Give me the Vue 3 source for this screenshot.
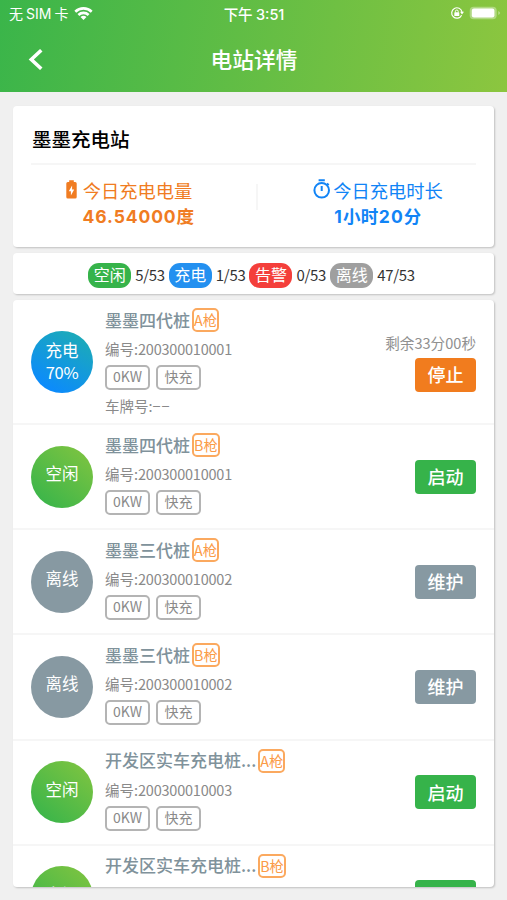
<template>
  <div class="page">
    <header class="header">
      <div class="status-bar">
        <div class="carrier">
          <span>无<span class="latin sim">SIM</span>卡</span>
          <svg class="wifi" viewBox="0 0 19 14">
            <path d="M.4 4.8a13 13 0 0 1 18.2 0L16.8 6.7a10.4 10.4 0 0 0-14.6 0z" />
            <path d="M3.5 8a8.6 8.6 0 0 1 12 0l-1.8 1.9a6 6 0 0 0-8.4 0z" />
            <path d="M6.5 11.1a4.3 4.3 0 0 1 6 0L9.5 14z" />
          </svg>
        </div>
        <div class="time">下午 <span class="latin">3:51</span></div>
        <div class="indicators">
          <svg class="lock" viewBox="0 0 14 14">
            <path d="M12 6A5.2 5.2 0 1 0 11.6 9.2" fill="none" stroke="currentColor" stroke-width="1.2" />
            <path d="M10 5.7h4L12 8.4z" />
            <rect x="4.3" y="6.3" width="5" height="3.8" rx=".6" />
            <path d="M5.4 6.5V5.4a1.4 1.4 0 0 1 2.8 0v1.1" fill="none" stroke="currentColor" />
          </svg>
          <svg class="battery" viewBox="0 0 32 14">
            <rect x=".7" y=".7" width="27" height="12.6" rx="4" class="battery-shell" />
            <rect x="2.8" y="2.6" width="22.6" height="8.8" rx="2.2" />
            <path d="M29.2 5v4q2-.8 2-2t-2-2z" class="battery-tip" />
          </svg>
        </div>
      </div>
      <div class="nav-bar">
        <svg class="back" viewBox="0 0 14 20">
          <path d="M12.500 1.200 3 10l9.500 8.800" />
        </svg>
        <h1>电站详情</h1>
      </div>
    </header>

    <main class="content">
      <section class="card summary">
        <h2>墨墨充电站</h2>
        <div class="stats">
          <div class="stat energy">
            <div class="stat-label">
              <svg class="energy-icon" viewBox="0 0 11 19">
                <path fill-rule="evenodd" d="M3.2.3h4.6v1.8h1.4q1.5 0 1.5 1.5v13.5q0 1.5-1.5 1.5H1.8Q.3 18.600.3 17.100V3.600Q.3 2.100 1.800 2.100h1.400zM6.100 5.500 2.800 11.200h2.100v4.300l3.300-5.900H6.100z" />
              </svg>
              <span>今日充电电量</span>
            </div>
            <div class="stat-value"><span class="latin">46.54000</span>度</div>
          </div>
          <div class="stat duration">
            <div class="stat-label">
              <svg class="timer-icon" viewBox="0 0 18 20">
                <circle cx="8.700" cy="11.300" r="7.300" />
                <path d="M5.600 1.200h6.200M8.700 7v5M14 4.400l1.700 1.700" />
              </svg>
              <span>今日充电时长</span>
            </div>
            <div class="stat-value"><span class="latin">1</span>小时<span class="latin">20</span>分</div>
          </div>
        </div>
      </section>

      <section class="card counts">
        <div v-for="count in counts" :key="count.label" class="count">
          <span class="pill" :class="count.type">{{ count.label }}</span>
          <span class="count-value">{{ count.value }}</span>
        </div>
      </section>

      <section class="card piles">
        <div v-for="(pile, index) in piles" :key="index" class="pile" :class="{ tall: pile.plate }">
          <div class="circle" :class="pile.type">
            <span>{{ pile.status }}</span>
            <span v-if="pile.percent" class="percent">{{ pile.percent }}</span>
          </div>
          <div class="info">
            <div class="name">
              <span class="name-text">{{ pile.name }}</span>
              <span class="gun">{{ pile.gun }}枪</span>
            </div>
            <div class="number">编号:<span class="digits">{{ pile.number }}</span></div>
            <div class="tags">
              <span class="tag">0KW</span>
              <span class="tag">快充</span>
            </div>
            <div v-if="pile.plate" class="plate">车牌号:<span class="dashes">{{ pile.plate }}</span></div>
          </div>
          <div class="action">
            <div v-if="pile.remain" class="remain">{{ pile.remain }}</div>
            <button :class="pile.type">{{ pile.action }}</button>
          </div>
        </div>
      </section>
    </main>
  </div>
</template>

<script setup>
const counts = [
  { label: '空闲', value: '5/53', type: 'idle' },
  { label: '充电', value: '1/53', type: 'charging' },
  { label: '告警', value: '0/53', type: 'alarm' },
  { label: '离线', value: '47/53', type: 'offline' },
];

const piles = [
  {
    name: '墨墨四代桩',
    gun: 'A',
    number: '200300010001',
    type: 'charging',
    status: '充电',
    percent: '70%',
    plate: '−−',
    remain: '剩余33分00秒',
    action: '停止',
  },
  { name: '墨墨四代桩', gun: 'B', number: '200300010001', type: 'idle', status: '空闲', action: '启动' },
  { name: '墨墨三代桩', gun: 'A', number: '200300010002', type: 'offline', status: '离线', action: '维护' },
  { name: '墨墨三代桩', gun: 'B', number: '200300010002', type: 'offline', status: '离线', action: '维护' },
  { name: '开发区实车充电桩...', gun: 'A', number: '200300010003', type: 'idle', status: '空闲', action: '启动' },
  { name: '开发区实车充电桩...', gun: 'B', number: '200300010003', type: 'idle', status: '空闲', action: '启动' },
];
</script>

<style>
body {
  background: #f0f0f0;
}
</style>

<style scoped>
.page {
  height: 900px;
  overflow: hidden;
  background: #f0f0f0;
  font-family: "Noto Sans CJK SC", sans-serif;
}

.page * {
  box-sizing: border-box;
}

.latin {
  font-family: Inter, sans-serif;
}

.header {
  height: 92px;
  color: white;
  background: linear-gradient(100deg, #3ab54a, #8cc63f);
}

.status-bar {
  display: grid;
  grid-template-columns: 1fr auto 1fr;
  align-items: center;
  height: 27px;
  padding: 0 6px 1px 9px;
  font-size: 14px;
}

.carrier {
  display: flex;
  align-items: center;
  gap: 6px;
}

.sim {
  margin: 0 3px;
}

.wifi {
  width: 19px;
  height: 14px;
  fill: currentColor;
}

.time {
  margin-left: -2px;
  font-size: 14.5px;
  font-weight: 500;
}

.indicators {
  display: flex;
  justify-content: flex-end;
  align-items: center;
  gap: 5px;
}

.lock {
  width: 14px;
  height: 14px;
  fill: currentColor;
}

.battery {
  width: 32px;
  height: 14px;
  fill: currentColor;
}

.battery-shell,
.battery-tip {
  opacity: 0.35;
}

.nav-bar {
  display: grid;
  grid-template-columns: 1fr auto 1fr;
  align-items: center;
  height: 65px;
  padding-left: 28px;
  padding-right: 27px;
  padding-bottom: 1px;
}

.back {
  width: 15px;
  height: 21px;
  fill: none;
  stroke: currentColor;
  stroke-width: 3.4;
}

h1 {
  margin: 0;
  font-size: 21.7px;
  font-weight: 500;
  line-height: 28px;
}

.content {
  display: flex;
  flex-direction: column;
  gap: 6px;
  padding: 14px 13px 0;
}

.card {
  width: 481px;
  background: white;
  border-radius: 4px;
  box-shadow: 1px 1px 2px rgba(0, 0, 0, 0.2);
}

.summary {
  height: 141px;
  padding: 0 18px;
}

h2 {
  height: 59px;
  margin: 0;
  padding: 0 1px;
  border-bottom: 2px solid #f6f6f6;
  font-size: 19.5px;
  font-weight: 500;
  line-height: 65px;
}

.stats {
  display: flex;
  padding-top: 11px;
}

.stat {
  flex: 1;
  display: flex;
  flex-direction: column;
  align-items: center;
  height: 54px;
}

.energy {
  padding-right: 31px;
  color: #f07c22;
  background: linear-gradient(#f6f6f6, #f6f6f6) right 8px / 2px 26px no-repeat;
}

.duration {
  padding-left: 22px;
  color: #1184f6;
}

.stat-label {
  display: flex;
  align-items: center;
  height: 27px;
  font-size: 18.3px;
}

.energy-icon {
  width: 11px;
  height: 19px;
  margin-right: 6px;
  margin-top: -1px;
  fill: currentColor;
}

.timer-icon {
  width: 18px;
  height: 20px;
  margin-right: 2px;
  margin-top: -1px;
  fill: none;
  stroke: currentColor;
  stroke-width: 2;
}

.stat-value {
  height: 26px;
  font-size: 17.5px;
  font-weight: 700;
  letter-spacing: 0.4px;
  line-height: 25px;
}

.energy .stat-value {
  padding-left: 19px;
}

.energy .latin {
  letter-spacing: 0.9px;
}

.duration .latin {
  letter-spacing: 1.1px;
}

.counts {
  display: flex;
  justify-content: center;
  align-items: center;
  gap: 4px;
  height: 41px;
  padding-top: 3px;
  padding-right: 4px;
}

.count {
  display: flex;
  align-items: center;
  gap: 4px;
}

.pill {
  width: 43px;
  height: 25px;
  border-radius: 11px;
  color: white;
  font-size: 16px;
  line-height: 23px;
  text-align: center;
}

.pill.idle {
  background: #36b34a;
}

.pill.charging {
  background: #2390f0;
}

.pill.alarm {
  background: #f43f3b;
}

.pill.offline {
  background: #9f9f9f;
}

.count-value {
  padding-bottom: 2px;
  color: #333;
  font-size: 15px;
  letter-spacing: -0.3px;
  line-height: 23px;
}

.piles {
  height: 587px;
  overflow: hidden;
}

.pile {
  display: flex;
  align-items: center;
  height: 105.2px;
  padding: 0 18px;
  border-bottom: 2px solid #f6f6f6;
}

.pile.tall {
  height: 125px;
}

.circle {
  display: flex;
  flex-direction: column;
  justify-content: center;
  align-items: center;
  width: 62px;
  height: 62px;
  padding-bottom: 7px;
  border-radius: 50%;
  color: white;
  font-size: 16.5px;
  line-height: 22px;
}

.circle.charging {
  padding-bottom: 2px;
  background: linear-gradient(30deg, #0c8bfb 15%, #1cabb7 90%);
}

.circle.idle {
  background: linear-gradient(40deg, #3ab54a 10%, #83c540);
}

.circle.offline {
  background: #8799a2;
}

.percent {
  letter-spacing: -0.3px;
}

.info {
  flex: 1;
  align-self: flex-start;
  padding: 7px 0 0 12px;
  color: #8a8a8a;
  font-size: 14.5px;
}

.name {
  display: flex;
  align-items: center;
  gap: 2px;
  height: 26px;
  color: #80929b;
  font-size: 17px;
  font-weight: 500;
}

.name-text {
  line-height: 26px;
  padding-bottom: 1px;
}

.gun {
  height: 24px;
  border: 2px solid #fba95f;
  border-radius: 5px;
  color: #fb9b48;
  font-size: 14.3px;
  font-weight: 400;
  line-height: 20px;
}

.number {
  height: 32px;
  line-height: 31px;
}

.digits {
  letter-spacing: -0.22px;
}

.tags {
  display: flex;
  gap: 6px;
}

.tag {
  width: 45px;
  height: 25px;
  border: 2px solid #b4b4b4;
  border-radius: 5px;
  font-size: 14px;
  line-height: 19px;
  text-align: center;
}

.plate {
  height: 32px;
  line-height: 31px;
}

.dashes {
  letter-spacing: 0.8px;
}

.action {
  display: flex;
  flex-direction: column;
  align-items: flex-end;
}

.remain {
  height: 25px;
  margin-top: 1px;
  color: #909090;
  font-size: 14.6px;
  line-height: 19px;
}

button {
  width: 61px;
  height: 34px;
  padding: 0;
  border: none;
  border-radius: 4px;
  color: white;
  font-family: inherit;
  font-size: 18px;
  font-weight: 500;
  line-height: 33px;
}

button.charging {
  background: #f17c1e;
}

button.idle {
  background: #36b34a;
}

button.offline {
  background: #8799a2;
}
</style>
